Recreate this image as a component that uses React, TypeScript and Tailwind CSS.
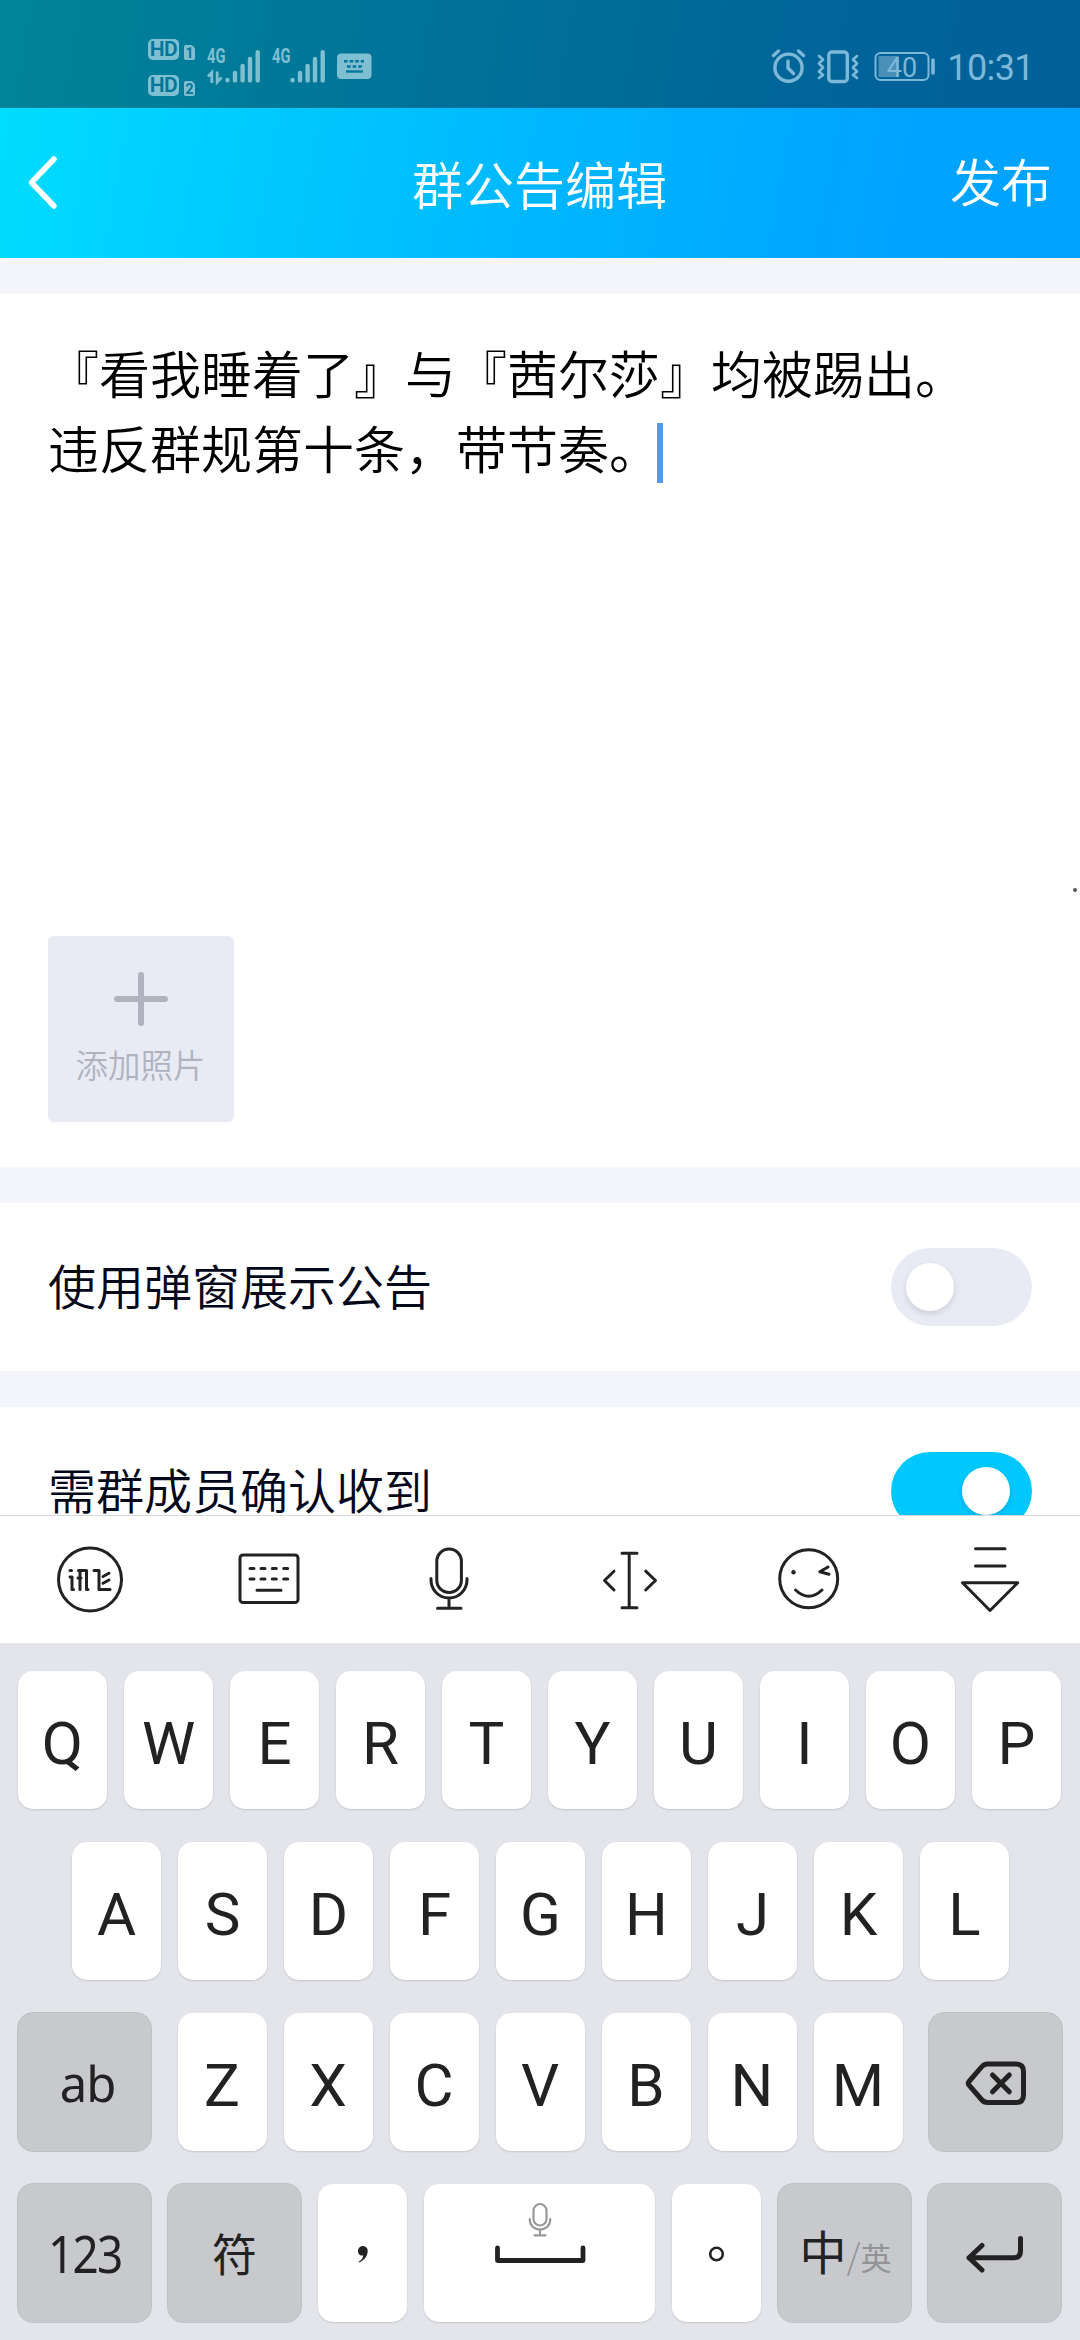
import React from "react";

const row1 = ["Q", "W", "E", "R", "T", "Y", "U", "I", "O", "P"];
const row2 = ["A", "S", "D", "F", "G", "H", "J", "K", "L"];
const row3 = ["Z", "X", "C", "V", "B", "N", "M"];

const HdBadge = ({ sim }: { sim: string }) => (
  <div className="flex items-end gap-[5px] h-[22px]">
    <div className="w-[31px] h-[21px] rounded-[5px] bg-[#7fbfd2] text-[#00779a] text-[21px] leading-[21px] text-center font-semibold font-['Roboto',sans-serif] tracking-[-0.5px]">
      HD
    </div>
    <div className="w-[11px] h-[15px] rounded-[2px] rounded-tr-[5px] bg-[#7fbfd2] text-[#00779a] text-[14px] leading-[16px] text-center font-bold font-['Roboto',sans-serif]">
      {sim}
    </div>
  </div>
);

const Signal = ({ arrows }: { arrows?: boolean }) => (
  <div className="w-[54px] h-[36px] relative">
    <div className="absolute left-0 top-[-3px] text-[21px] leading-[21px] font-bold text-[#7fbfd2] font-['Roboto',sans-serif] origin-left scale-x-[0.7]">
      4G
    </div>
    <svg width="54" height="36" viewBox="0 0 54 36" fill="none" stroke="#7fbfd2" strokeWidth="4.4" strokeLinecap="round">
      {arrows && (
        <g strokeWidth="2.8" strokeLinecap="butt">
          <path d="M4.8 34V23.5L1 27.5" />
          <path d="M10.2 22.5V33L14.5 28.5" />
        </g>
      )}
      <path d="M20.5 31v.2M28 24v7.4M35.6 17v14.4M43 10v21.4M50.7 3.2v28.2" />
    </svg>
  </div>
);

const StatusBar = () => (
  <div className="h-[108px] flex items-start bg-black/40 pl-[148px] pr-[46px]">
    <div className="flex flex-col gap-[14px] pt-[38px] w-[59px]">
      <HdBadge sim="1" />
      <HdBadge sim="2" />
    </div>
    <div className="flex gap-[11px] pt-[49px]">
      <Signal arrows />
      <Signal />
      <svg className="mt-1" width="36" height="28" viewBox="0 0 36 28">
        <rect x="0" y="0.5" width="34.5" height="25.5" rx="4" fill="#7fbfd2" />
        <path d="M7 8.2h20M10 13.5h15" stroke="#00779a" strokeWidth="2.6" strokeDasharray="3.6 2" />
        <path d="M9 18.5h17" stroke="#00779a" strokeWidth="2.4" />
      </svg>
    </div>
    <div className="ml-auto flex items-center pt-[46px] h-[88px] text-[#7db8d8] font-['Roboto',sans-serif]">
      <svg width="166" height="42" viewBox="769 46 166 42" fill="none" stroke="#7db8d8" strokeWidth="3.4" strokeLinecap="round" strokeLinejoin="round">
        <circle cx="788.5" cy="67.7" r="13.6" />
        <path d="M788 61v7l5.5 5.5" />
        <path d="M773.5 55.5l5-4.5M803.5 55.5l-5-4.5" />
        <rect x="828.8" y="52" width="18.5" height="29.5" rx="3" />
        <path d="M819 56l4 3.5-4 4 4 4-4 4 4 3.5-4 3M857 56l-4 3.5 4 4-4 4 4 4-4 3.5 4 3" strokeWidth="2.8" />
        <rect x="875.5" y="53" width="53" height="27" rx="5" strokeWidth="2" />
        <rect x="878.5" y="56" width="20" height="21" fill="#4a90b8" stroke="none" />
        <path d="M933 60v13" strokeWidth="3.6" />
        <text x="902" y="76.5" textAnchor="middle" fontSize="27" fill="#7db8d8" stroke="none" className="font-['Roboto',sans-serif]">
          40
        </text>
      </svg>
      <div className="text-[36px] leading-[42px] ml-[12px] pt-[2px] tracking-[-0.6px]">10:31</div>
    </div>
  </div>
);

const Header = () => (
  <div className="h-[150px] grid grid-cols-[1fr_auto_1fr] items-center pl-[26px] pr-[28px] text-white text-[51px] leading-[60px] font-[350]">
    <svg width="34" height="60" viewBox="0 0 34 60" fill="none" stroke="#fff" strokeWidth="5.5" strokeLinecap="round" strokeLinejoin="round">
      <path d="M28 6L5.5 29.5 28 53" />
    </svg>
    <div className="pl-px">群公告编辑</div>
    <div className="text-right pb-[7px]">发布</div>
  </div>
);

const Toggle = ({ on }: { on?: boolean }) => (
  <div
    className={
      on
        ? "w-[141px] h-[78px] rounded-full flex items-center bg-[#00c8ff] pl-[71px]"
        : "w-[141px] h-[78px] rounded-full flex items-center bg-[#e8ebf4] pl-[15px]"
    }
  >
    <div className="w-12 h-12 rounded-full bg-white shadow-[0_3px_6px_rgba(0,0,0,0.12)]" />
  </div>
);

const SettingRow = ({ label, on }: { label: string; on?: boolean }) => (
  <div className="h-[168px] shrink-0 bg-white flex items-center justify-between px-12 text-[48px] leading-[48px] font-[350] text-[#03081a]">
    <div className="pb-[7px]">{label}</div>
    <Toggle on={on} />
  </div>
);

const ToolIcon = ({ children }: { children: React.ReactNode }) => (
  <div className="flex-1 flex items-center justify-center">
    <svg width="100" height="100" viewBox="-50 -50 100 100" fill="none" stroke="#222" strokeWidth="3" strokeLinecap="round" strokeLinejoin="round">
      {children}
    </svg>
  </div>
);

const Toolbar = () => (
  <div className="h-[128px] border-t border-[#d6d8dc] bg-white flex">
    <ToolIcon>
      <circle cx="0" cy="-0.5" r="31.5" />
      <path d="M-20 -9.5h1.5M-20 -3h2V9.5h1.5M-11.5 -9.5H-3.5V9.5h1.5M-10 -9V9.5M-12 -2h3M4 -9.500H9V9.500H20M13 -3.500l6 -3.300M13 3.300l6 -3.300" />
    </ToolIcon>
    <ToolIcon>
      <rect x="-30" y="-25" width="58" height="47.5" rx="3" />
      <path d="M-20 -11.5h4M-9 -11.5h4M2.3 -11.5h4M13.7 -11.5h4M-20 -1h4M-9 -1h4M2.3 -1h4M13.7 -1h4M-13 10.2h24" />
    </ToolIcon>
    <ToolIcon>
      <rect x="-13.2" y="-31" width="24.6" height="43.5" rx="12.3" />
      <path d="M-19 -1.5v1.5a18 18 0 0 0 36 0v-1.5M-1 19v9M-12.5 28.2h23.5" />
    </ToolIcon>
    <ToolIcon>
      <path d="M-0.8 -26.8V27.7M-8 -26.8H7M-8 27.7H7M-16 -8.8L-25.5 .5L-16 10M15.7 -8.8L25.5 .5L15.7 10" />
    </ToolIcon>
    <ToolIcon>
      <circle cx="-1.3" cy="-1.2" r="29" />
      <circle cx="-16.5" cy="-7.8" r="2.2" fill="#222" stroke="none" />
      <path d="M18 -13L9.8 -8.2L19 -5.7M-14.5 10Q-1.2 22.5 12 10" />
    </ToolIcon>
    <ToolIcon>
      <path d="M-14.5 -31.3H15M-14.5 -14H15M-27.5 2.7H27.8L0 30.5Z" />
    </ToolIcon>
  </div>
);

const Key = ({ children, className = "" }: { children: React.ReactNode; className?: string }) => (
  <div
    className={`h-[138px] mx-px rounded-[15px] bg-white shadow-[0_1px_2px_rgba(0,0,0,0.14)] flex items-center justify-center text-[60px] leading-none text-[#222] font-['Roboto',sans-serif] ${className || "w-[89px]"}`}
  >
    {children}
  </div>
);

const DarkKey = ({ children }: { children: React.ReactNode }) => (
  <div className="w-[135px] h-[140px] rounded-[16px] bg-[#c8c9cd] border border-[#c0c1c5] flex items-center justify-center text-[#222]">
    {children}
  </div>
);

const Letter = ({ value }: { value: string }) => (
  <Key>
    <span className="pt-[8px]">{value}</span>
  </Key>
);

const Keyboard = () => (
  <div className="h-[697px] bg-[#e4e5eb] pt-[27px] px-[17px] flex flex-col gap-[31px]">
    <div className="h-[140px] flex items-center gap-[15px]">
      {row1.map((k) => (
        <Letter key={k} value={k} />
      ))}
    </div>
    <div className="h-[140px] flex items-center gap-[15px] pl-[54px]">
      {row2.map((k) => (
        <Letter key={k} value={k} />
      ))}
    </div>
    <div className="h-[140px] flex items-center justify-between">
      <DarkKey>
        <span className="text-[49px] leading-[60px] pl-[6px] pt-[1px] tracking-[-1px] font-['Noto_Sans',sans-serif]">ab</span>
      </DarkKey>
      <div className="flex gap-[15px]">
        {row3.map((k) => (
          <Letter key={k} value={k} />
        ))}
      </div>
      <DarkKey>
        <svg width="80" height="60" viewBox="-40 -30 80 60" fill="none" stroke="#222" strokeWidth="5" strokeLinecap="round" strokeLinejoin="round">
          <path d="M-27 -0.5Q-28.5 1.3 -27 3.1L-14.5 17.5Q-12 20.5 -8.5 20.5H20Q27.5 20.5 27.5 13V-10.5Q27.5 -18 20 -18H-8.5Q-12 -18 -14.5 -15Z" />
          <path d="M-3.5 -7L13.3 9.8M13.3 -7L-3.5 9.8" />
        </svg>
      </DarkKey>
    </div>
    <div className="h-[140px] flex items-center gap-[15px]">
      <DarkKey>
        <span className="text-[51px] leading-[60px] tracking-[-2px] -mx-3 scale-x-[0.9] font-['Noto_Sans',sans-serif]">123</span>
      </DarkKey>
      <DarkKey>
        <span className="text-[45px] leading-[60px]">符</span>
      </DarkKey>
      <Key>
        <svg width="20" height="30" viewBox="0 0 20 30">
          <path d="M5 12.5a4.8 4.8 0 0 1 9.7 .5c0 5-3.7 9.5-8.5 11.5l-.6-.8c2.8-1.7 4.5-4 4.7-6.3-3 .8-5.6-1.5-5.3-4.9z" fill="#222" />
        </svg>
      </Key>
      <Key className="w-[231px]">
        <svg width="231" height="138" viewBox="424 2184 231 138" fill="none" strokeLinecap="round" strokeLinejoin="round">
          <g stroke="#999" strokeWidth="2.2">
            <rect x="533.5" y="2204" width="13" height="21.5" rx="6.5" />
            <path d="M529.8 2219v1a10.2 9.5 0 0 0 20.4 0v-1M540 2230v5M534.5 2235.3h11" />
          </g>
          <path d="M497.5 2248v12.500H583v-12.500" stroke="#222" strokeWidth="4.8" />
        </svg>
      </Key>
      <Key>
        <svg width="20" height="20" viewBox="0 0 20 20" fill="none" stroke="#222" strokeWidth="2.6">
          <circle cx="9.5" cy="11" r="6.3" />
        </svg>
      </Key>
      <DarkKey>
        <div className="flex items-baseline pl-[2px]">
          <span className="text-[47px] leading-[60px]">中</span>
          <span className="text-[35px] leading-[60px] text-[#929397] font-light">/</span>
          <span className="text-[31px] leading-[60px] text-[#929397]">英</span>
        </div>
      </DarkKey>
      <DarkKey>
        <svg width="80" height="60" viewBox="-40 -30 80 60" fill="none" stroke="#222" strokeWidth="5" strokeLinecap="round" strokeLinejoin="round">
          <path d="M-13 -7.5L-26 4.7L-13 17M-26 4.7H19Q25.5 4.7 25.5 -2V-14.5" />
        </svg>
      </DarkKey>
    </div>
  </div>
);

const App = () => {
  return (
    <div
      lang="zh-CN"
      className="w-[1080px] h-[2340px] overflow-hidden flex flex-col bg-[#f4f5fa] font-['Noto_Sans_CJK_SC',sans-serif]"
    >
      <div className="bg-[linear-gradient(100deg,#00deff_0%,#00ccff_22%,#00b6ff_52%,#00a5ff_80%,#00a2ff_100%)]">
        <StatusBar />
        <Header />
      </div>

      {/* page content, cut off by the keyboard */}
      <div className="h-[1257px] pt-9 flex flex-col gap-9 overflow-hidden">
        <div className="h-[873px] shrink-0 bg-white px-12 pt-[41px] pb-[45px] flex flex-col">
          <div className="text-[51px] leading-[75px] text-black font-[350]">
            <div>『看我睡着了』与『茜尔莎』均被踢出。</div>
            <div className="flex items-center">
              违反群规第十条，带节奏。
              <span className="w-[6px] h-[60px] -ml-[3px] mt-[10px] bg-[#5499ea]" />
            </div>
          </div>
          <div className="mt-[403px] -mr-[45px] self-end w-1 h-1 rounded-full bg-[#555]" />
          <div className="mt-auto w-[186px] h-[186px] rounded-md bg-[#e8ebf4] flex flex-col items-center pt-9">
            <svg width="54" height="54" viewBox="0 0 54 54" stroke="#b0b3bf" strokeWidth="6" strokeLinecap="round">
              <path d="M27 3v48M3 27h48" />
            </svg>
            <div className="mt-[14px] pr-px text-[32.5px] leading-[48px] font-[350] text-[#b0b3bf]">添加照片</div>
          </div>
        </div>
        <SettingRow label="使用弹窗展示公告" />
        <SettingRow label="需群成员确认收到" on />
      </div>

      <Toolbar />
      <Keyboard />
    </div>
  );
};

export default App;
